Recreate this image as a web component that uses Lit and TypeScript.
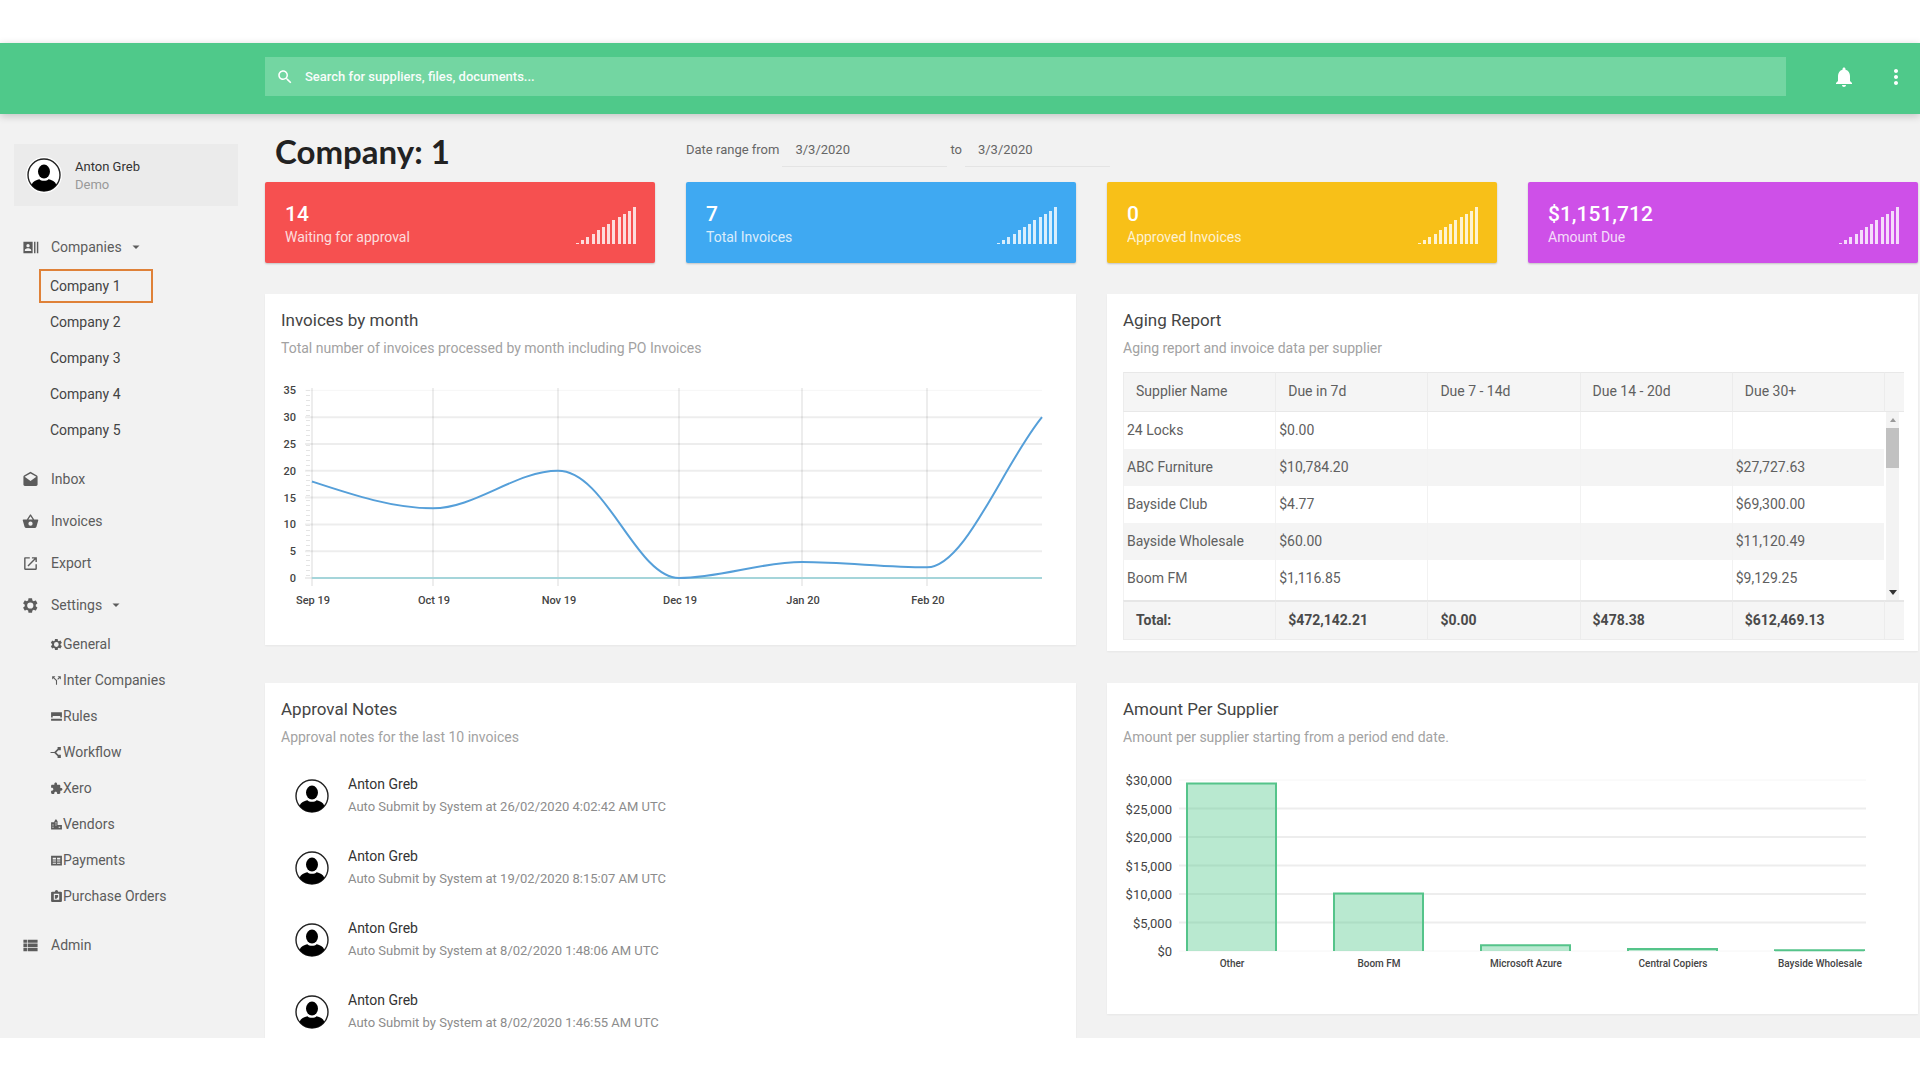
import { LitElement, html, svg, css } from "lit";
import { customElement, property } from "lit/decorators.js";
import { classMap } from "lit/directives/class-map.js";

const GEAR =
  "M19.4 13c.04-.32.06-.65.06-1s-.02-.68-.07-1l2.2-1.7c.2-.15.25-.42.12-.64l-2.08-3.6c-.13-.22-.39-.3-.61-.22l-2.6 1.04c-.53-.4-1.12-.75-1.76-1.01l-.4-2.76A.5.5 0 0 0 13.77 1.7h-4.16c-.26 0-.46.18-.5.42l-.4 2.76c-.63.26-1.22.6-1.75 1L4.36 4.85c-.23-.08-.49 0-.61.22l-2.08 3.6c-.13.22-.08.48.12.63L3.99 11c-.05.32-.09.67-.09 1s.02.68.07 1l-2.2 1.7c-.2.15-.25.43-.12.64l2.08 3.6c.13.22.39.3.61.22l2.6-1.04c.53.4 1.12.75 1.76 1.01l.4 2.76c.05.24.25.41.5.41h4.16c.26 0 .47-.17.5-.41l.4-2.76c.64-.26 1.22-.6 1.75-1.01l2.6 1.04c.23.08.49 0 .61-.22l2.08-3.6c.12-.22.07-.49-.12-.64L19.4 13zM11.7 16.4a4.4 4.4 0 1 1 0-8.8 4.4 4.4 0 0 1 0 8.8z";

const ICONS: Record<string, string> = {
  search:
    "M15.5 14h-.79l-.28-.27C15.41 12.59 16 11.11 16 9.5 16 5.91 13.09 3 9.5 3S3 5.91 3 9.5 5.91 16 9.5 16c1.61 0 3.09-.59 4.23-1.57l.27.28v.79l5 4.99L20.49 19l-4.99-5zm-6 0C7.01 14 5 11.99 5 9.5S7.01 5 9.5 5 14 7.01 14 9.5 11.99 14 9.5 14z",
  bell: "M12 22c1.1 0 2-.9 2-2h-4c0 1.1.89 2 2 2zm6-6v-5c0-3.07-1.64-5.64-4.5-6.32V4c0-.83-.67-1.5-1.5-1.5s-1.5.67-1.5 1.5v.68C7.63 5.36 6 7.92 6 11v5l-2 2v1h16v-1l-2-2z",
  more: "M12 8c1.1 0 2-.9 2-2s-.9-2-2-2-2 .9-2 2 .9 2 2 2zm0 2c-1.1 0-2 .9-2 2s.9 2 2 2 2-.9 2-2-.9-2-2-2zm0 6c-1.1 0-2 .9-2 2s.9 2 2 2 2-.9 2-2-.9-2-2-2z",
  caret: "M5 9l7 7 7-7z",
  contacts:
    "M2 4h13v16H2zM8.5 7a2.4 2.4 0 1 0 0 4.8 2.4 2.4 0 0 0 0-4.8zM4 17h9v-1.3c0-1.8-3-2.6-4.5-2.6S4 13.9 4 15.7zM17 4h2v16h-2zM21 4h2v16h-2z",
  inbox:
    "M22 8c0-.72-.37-1.35-.94-1.7L12 1 2.95 6.3C2.38 6.65 2 7.28 2 8v11c0 1.1.9 2 2 2h16c1.1 0 2-.9 2-2zM12 14L3.74 8 12 3.5 20.26 8z",
  basket:
    "M17.21 9l-4.38-6.56a1 1 0 0 0-1.66 0L6.79 9H2c-.55 0-1 .45-1 1l.04.27 2.54 9.27A2 2 0 0 0 5.5 21h13a2 2 0 0 0 1.93-1.46l2.54-9.27L23 10c0-.55-.45-1-1-1zM9 9l3-4.4L15 9zM12 18a3 3 0 1 1 0-6 3 3 0 0 1 0 6z",
  export:
    "M19 19H5V5h6V3H4.5C3.6 3 3 3.7 3 4.5v15c0 .9.7 1.5 1.5 1.5h15c.9 0 1.5-.7 1.5-1.5V13h-2zM14 3v2h3.59l-9.83 9.83 1.41 1.41L19 6.41V10h2V3z",
  gear: GEAR,
  split:
    "M14 4l2.3 2.3-2.9 2.9 1.4 1.4 2.9-2.9L20 10V4zM10 4H4v6l2.3-2.3 4.7 4.7V20h2v-8.4L7.7 6.3z",
  rules: "M2 4h20v10h-3v-3H5v3H2zM2 16h20v4H2z",
  workflow: "M1 11h7l6-6V2h6v6h-4.5l-4 4 4 4H20v6h-6v-3l-6-6H1z",
  puzzle:
    "M20.5 11H19V7c0-1.1-.9-2-2-2h-4V3.5C13 2.12 11.88 1 10.5 1S8 2.12 8 3.5V5H4c-1.1 0-1.99.9-1.99 2v3.8H3.5c1.49 0 2.7 1.21 2.7 2.7s-1.21 2.7-2.7 2.7H2V20c0 1.1.9 2 2 2h3.8v-1.5c0-1.49 1.21-2.7 2.7-2.7 1.49 0 2.7 1.21 2.7 2.7V22H17c1.1 0 2-.9 2-2v-4h1.5c1.38 0 2.5-1.12 2.5-2.5S21.88 11 20.5 11z",
  vendors:
    "M2 8h6V6l3-4 3 4v7h8v8H2zM4.5 12v2h2v-2zM4.5 16v2h2v-2zM10 8v2h2V8zM10 12v2h2v-2zM16 16v2h3v-2z",
  payments:
    "M2 3h20v18H2zM5 7v3h6V7zM13 7v3h6V7zM5 12v2h6v-2zM13 12v2h6v-2zM5 16v2h6v-2zM13 16v2h6v-2z",
  orders:
    "M4 3h5a3 3 0 0 1 6 0h5l2 1v17l-2 1H4l-2-1V4zM7 7v11h10V7zM9 9h6v4l-3 3H9z",
  admin:
    "M2 4h5v4H2zM8 4h14v4H8zM2 9h5v5H2zM8 9h14v5H8zM2 15h5v5H2zM8 15h14v5H8z",
};

@customElement("ui-icon")
class UiIcon extends LitElement {
  @property() name = "search";
  static styles = css`
    :host {
      display: inline-flex;
      flex: none;
      width: 17px;
      height: 17px;
    }
    .glyph {
      width: 100%;
      height: 100%;
      fill: currentColor;
    }
  `;
  render() {
    return html`<svg class="glyph" viewBox="0 0 24 24" aria-hidden="true">
      <path fill-rule="evenodd" d=${ICONS[this.name]}></path>
    </svg>`;
  }
}

@customElement("user-avatar")
class UserAvatar extends LitElement {
  static styles = css`
    :host {
      display: block;
      flex: none;
      width: 36px;
      height: 36px;
    }
    .face {
      display: block;
      width: 100%;
      height: 100%;
    }
  `;
  render() {
    return html`<svg class="face" viewBox="0 0 36 36" aria-hidden="true">
      <circle cx="18" cy="18" r="18" fill="#fff"></circle>
      <circle cx="18" cy="18" r="16" fill="#fff" stroke="#222" stroke-width="1.4"></circle>
      <ellipse cx="18" cy="14.6" rx="6" ry="7"></ellipse>
      <path d="M5.5 28C7 24 10 23.2 13.5 22.2c1.5 2 7.5 2 9 0C26 23.2 29 24 30.5 28A16 16 0 0 1 5.5 28z"></path>
    </svg>`;
  }
}

interface NavItem {
  label: string;
  icon: string;
  children?: { label: string; icon?: string; active?: boolean }[];
}

const NAV: NavItem[] = [
  {
    label: "Companies",
    icon: "contacts",
    children: [1, 2, 3, 4, 5].map((n) => ({ label: `Company ${n}`, active: n === 1 })),
  },
  { label: "Inbox", icon: "inbox" },
  { label: "Invoices", icon: "basket" },
  { label: "Export", icon: "export" },
  {
    label: "Settings",
    icon: "gear",
    children: [
      { label: "General", icon: "gear" },
      { label: "Inter Companies", icon: "split" },
      { label: "Rules", icon: "rules" },
      { label: "Workflow", icon: "workflow" },
      { label: "Xero", icon: "puzzle" },
      { label: "Vendors", icon: "vendors" },
      { label: "Payments", icon: "payments" },
      { label: "Purchase Orders", icon: "orders" },
    ],
  },
  { label: "Admin", icon: "admin" },
];

@customElement("side-nav")
class SideNav extends LitElement {
  static styles = css`
    :host {
      display: block;
      color: #5c5c5c;
      font-size: 14px;
      line-height: 20px;
    }
    .profile {
      display: flex;
      align-items: center;
      gap: 13px;
      height: 62px;
      margin: 0 27px 20px 14px;
      padding: 0 12px;
      box-sizing: border-box;
      background: #ebebeb;
      font-size: 13px;
      line-height: 18px;
    }
    .who {
      padding-top: 1px;
      color: #333;
    }
    .role {
      color: #999;
    }
    .list {
      margin: 0;
      padding: 0;
      list-style: none;
    }
    .top {
      display: flex;
      align-items: center;
      gap: 12px;
      width: 100%;
      height: 42px;
      padding: 0 22px;
      box-sizing: border-box;
      border: 0;
      background: none;
      color: inherit;
      font: inherit;
      text-decoration: none;
      cursor: pointer;
    }
    .caret {
      width: 12px;
      height: 12px;
      margin-left: -4px;
    }
    .sub {
      margin: 0 0 10px;
      padding: 0 0 0 39px;
      list-style: none;
    }
    .row {
      display: flex;
      align-items: center;
      height: 36px;
    }
    .leaf {
      display: flex;
      align-items: center;
      min-width: 92px;
      height: 30px;
      padding: 0 9px;
      border: 2px solid transparent;
      color: inherit;
      text-decoration: none;
    }
    .plain {
      color: #444;
    }
    .active {
      border-color: #df8138;
    }
    .mini {
      width: 13px;
      height: 13px;
    }
  `;
  render() {
    return html`
      <div class="profile">
        <user-avatar></user-avatar>
        <div>
          <div class="who">Anton Greb</div>
          <div class="role">Demo</div>
        </div>
      </div>
      <nav aria-label="Main">
        <ul class="list">
          ${NAV.map(
            (item) => html`<li>
              ${item.children
                ? html`<button class="top" type="button" aria-expanded="true">
                      <ui-icon name=${item.icon}></ui-icon>${item.label}
                      <ui-icon class="caret" name="caret"></ui-icon>
                    </button>
                    <ul class="sub">
                      ${item.children.map(
                        (c) => html`<li class="row">
                          <a
                            class=${classMap({ leaf: true, plain: !c.icon, active: !!c.active })}
                            href="#${c.label}"
                            >${c.icon ? html`<ui-icon class="mini" name=${c.icon}></ui-icon>` : ""}${c.label}</a
                          >
                        </li>`
                      )}
                    </ul>`
                : html`<a class="top" href="#${item.label}"
                    ><ui-icon name=${item.icon}></ui-icon>${item.label}</a
                  >`}
            </li>`
          )}
        </ul>
      </nav>
    `;
  }
}

@customElement("kpi-card")
class KpiCard extends LitElement {
  @property() value = "";
  @property() label = "";
  static styles = css`
    :host {
      display: flex;
      align-items: flex-start;
      justify-content: space-between;
      height: 81px;
      padding: 19px 19px 0 20px;
      box-sizing: border-box;
      border-radius: 2px;
      box-shadow: 0 1px 2px #0003;
      color: #fff;
    }
    .value {
      font-size: 21px;
      line-height: 26px;
      font-weight: 500;
    }
    .label {
      font-size: 14px;
      line-height: 20px;
      opacity: 0.8;
    }
    .bars {
      width: 60px;
      height: 38px;
      margin-top: 5px;
      fill: #fffc;
    }
  `;
  render() {
    const heights = [1, 4, 7, 10, 14, 17, 20, 24, 27, 30, 33, 37];
    return html`
      <div>
        <div class="value">${this.value}</div>
        <div class="label">${this.label}</div>
      </div>
      <svg class="bars" viewBox="0 0 60 38" aria-hidden="true">
        ${heights.map((h, i) => svg`<rect x=${Math.round(i * 5.2)} y=${38 - h} width="3" height=${h}></rect>`)}
      </svg>
    `;
  }
}

@customElement("panel-card")
class PanelCard extends LitElement {
  @property() heading = "";
  @property() note = "";
  static styles = css`
    :host {
      display: block;
      padding: 16px 14px 11px 16px;
      background: #fff;
      box-shadow: 0 1px 2px #0000000d;
    }
    .heading {
      margin: 0;
      color: #444;
      font-size: 17px;
      line-height: 20px;
      font-weight: 400;
    }
    .note {
      margin: 7px 0 13px;
      color: #a2a2a2;
      font-size: 14px;
      line-height: 22px;
    }
  `;
  render() {
    return html`<h2 class="heading">${this.heading}</h2>
      <p class="note">${this.note}</p>
      <slot></slot>`;
  }
}

const chartStyles = css`
  :host {
    display: block;
  }
  .chart {
    display: block;
    width: 100%;
    height: auto;
    overflow: visible;
    font-family: Roboto, "Liberation Sans", sans-serif;
    fill: #444;
  }
  .end {
    text-anchor: end;
  }
  .mid {
    text-anchor: middle;
  }
  .grid {
    stroke: #000;
    stroke-opacity: 0.07;
    stroke-width: 2;
  }
  .faint {
    stroke: #f6f6f6;
    stroke-width: 1;
  }
`;

@customElement("invoice-chart")
class InvoiceChart extends LitElement {
  static styles = [
    chartStyles,
    css`
      .axis {
        font-size: 11px;
        font-weight: 500;
      }
      .line {
        fill: none;
        stroke: #559fd9;
        stroke-width: 2;
      }
      .zero {
        stroke: #a5d5da;
        stroke-width: 2;
      }
      .ticks {
        stroke: #e4e4e4;
        stroke-width: 4;
        stroke-dasharray: 1 4;
      }
    `,
  ];
  render() {
    const y = (v: number) => 206 - v * 5.36;
    const months: [string, number][] = [
      ["Sep 19", 31],
      ["Oct 19", 152],
      ["Nov 19", 277],
      ["Dec 19", 398],
      ["Jan 20", 521],
      ["Feb 20", 646],
    ];
    return html`<svg class="chart" viewBox="0 0 781 262" role="img" aria-label="Invoices by month">
      ${[0, 5, 10, 15, 20, 25, 30, 35].map(
        (v) => svg`<line class=${v === 35 ? "faint" : "grid"} x1="24" x2="761" y1=${y(v)} y2=${y(v)}></line>
          <text class="axis end" x="15" y=${y(v) + 4}>${v}</text>`
      )}
      <line class="ticks" x1="27" x2="27" y1="18" y2="206"></line>
      ${months.map(
        ([m, x]) => svg`<line class="grid" x1=${x} x2=${x} y1="16" y2="214"></line>
          <text class="axis mid" x=${x + 1} y="232">${m}</text>`
      )}
      <line class="zero" x1="31" x2="761" y1="206" y2="206"></line>
      <path
        class="line"
        d="M31 109.5C72 123 112 136.3 152 136.3C194 136.3 235 98.8 277 98.8C325 98.8 355 206 398 206C439 206 480 190 521 190C563 190 604 195.3 646 195.3C684 195.3 722 93 761 45.2"
      ></path>
    </svg>`;
  }
}

@customElement("supplier-chart")
class SupplierChart extends LitElement {
  static styles = [
    chartStyles,
    css`
      .axis {
        font-size: 13px;
      }
      .cat {
        font-size: 10px;
        font-weight: 500;
      }
      .bar {
        fill: #4fc98a;
        fill-opacity: 0.4;
      }
      .edge {
        fill: none;
        stroke: #55c48a;
        stroke-width: 2;
      }
    `,
  ];
  render() {
    const base = 190;
    const y = (v: number) => base - (v * 171) / 30000;
    const data: [string, number][] = [
      ["Other", 29400],
      ["Boom FM", 10100],
      ["Microsoft Azure", 1000],
      ["Central Copiers", 350],
      ["Bayside Wholesale", 120],
    ];
    return html`<svg class="chart" viewBox="0 0 781 242" role="img" aria-label="Amount per supplier">
      ${[0, 5000, 10000, 15000, 20000, 25000, 30000].map(
        (v) => svg`<line class=${v % 30000 ? "grid" : "faint"} x1="56" x2="743" y1=${y(v)} y2=${y(v)}></line>
          <text class="axis end" x="49" y=${y(v) + 5}>$${v.toLocaleString("en-US")}</text>`
      )}
      ${data.map(([name, v], i) => {
        const x = 64 + i * 147;
        return svg`<rect class="bar" x=${x} y=${y(v)} width="89" height=${base - y(v)}></rect>
          <path class="edge" d="M${x} ${base}V${y(v)}H${x + 89}V${base}"></path>
          <text class="cat mid" x=${x + 45} y="206">${name}</text>`;
      })}
    </svg>`;
  }
}

const AGING = [
  ["24 Locks", "$0.00", "", "", ""],
  ["ABC Furniture", "$10,784.20", "", "", "$27,727.63"],
  ["Bayside Club", "$4.77", "", "", "$69,300.00"],
  ["Bayside Wholesale", "$60.00", "", "", "$11,120.49"],
  ["Boom FM", "$1,116.85", "", "", "$9,129.25"],
];

@customElement("aging-table")
class AgingTable extends LitElement {
  static styles = css`
    :host {
      display: block;
      color: #606060;
    }
    .table {
      width: 100%;
      table-layout: fixed;
      border-collapse: separate;
      border-spacing: 0;
      font-size: 14px;
      line-height: 20px;
      text-align: left;
    }
    .last {
      width: 20px;
    }
    .head,
    .total {
      height: 40px;
      padding: 0 12px 2px;
      box-sizing: border-box;
      border-left: 1px solid #ececec;
      background: #f5f5f5;
    }
    .head {
      border-top: 1px solid #e8e8e8;
      border-bottom: 1px solid #e8e8e8;
      font-weight: 400;
    }
    .total {
      border-top: 2px solid #e6e6e6;
      border-bottom: 1px solid #ececec;
      color: #4a4a4a;
      font-weight: 700;
    }
    .cell {
      height: 37px;
      padding: 0 3px 2px;
      box-sizing: border-box;
      border-left: 1px solid #f2f2f2;
    }
    .even {
      background: #f4f4f4;
    }
    .tail .cell {
      height: 40px;
      padding-bottom: 5px;
    }
    .rail {
      height: 188px;
      padding: 0 5px 0 2px;
      background: #fff;
    }
    .scroll {
      display: flex;
      flex-direction: column;
      align-items: center;
      height: 188px;
      background: #f3f3f3;
    }
    .thumb {
      width: 100%;
      height: 40px;
      margin-bottom: auto;
      background: #c1c1c1;
    }
    .arrow {
      width: 10px;
      height: 16px;
      fill: #999;
    }
    .down {
      fill: #333;
    }
  `;
  render() {
    return html`<table class="table">
      <colgroup>
        <col /><col /><col /><col /><col /><col class="last" />
      </colgroup>
      <thead>
        <tr>
          ${["Supplier Name", "Due in 7d", "Due 7 - 14d", "Due 14 - 20d", "Due 30+"].map(
            (h) => html`<th class="head" scope="col">${h}</th>`
          )}
          <td class="head"></td>
        </tr>
      </thead>
      <tbody>
        ${AGING.map(
          (r, i) => html`<tr class=${classMap({ even: i % 2 === 1, tail: i === 4 })}>
            ${r.map((c) => html`<td class="cell">${c}</td>`)}
            ${i === 0
              ? html`<td class="rail" rowspan="5">
                  <div class="scroll">
                    <svg class="arrow" viewBox="0 0 10 16"><path d="M5 6l3 4H2z"></path></svg>
                    <div class="thumb"></div>
                    <svg class="arrow down" viewBox="0 0 10 16"><path d="M5 11L1 6h8z"></path></svg>
                  </div>
                </td>`
              : ""}
          </tr>`
        )}
      </tbody>
      <tfoot>
        <tr>
          ${["Total:", "$472,142.21", "$0.00", "$478.38", "$612,469.13", ""].map(
            (t) => html`<td class="total">${t}</td>`
          )}
        </tr>
      </tfoot>
    </table>`;
  }
}

@customElement("app-root")
class AppRoot extends LitElement {
  static styles = css`
    :host {
      display: flex;
      flex-direction: column;
      height: 100vh;
      padding: 43px 0 42px;
      box-sizing: border-box;
      background: #fff;
      font-family: Roboto, "Liberation Sans", sans-serif;
    }
    .bar {
      display: grid;
      grid-template-columns: 265px 1fr 134px;
      align-items: center;
      flex: none;
      height: 71px;
      padding-bottom: 4px;
      box-sizing: border-box;
      background: #4fc98a;
      box-shadow: 0 2px 8px #0003;
      z-index: 1;
    }
    .search {
      display: flex;
      align-items: center;
      grid-column: 2;
      gap: 11px;
      height: 39px;
      padding: 0 11px;
      background: #73d6a2;
      color: #fff;
    }
    .glass {
      width: 18px;
      height: 18px;
    }
    .field {
      flex: 1;
      border: 0;
      outline: 0;
      padding: 0;
      background: none;
      color: inherit;
      font: 500 13px/20px Roboto, "Liberation Sans", sans-serif;
    }
    .field::placeholder {
      color: #fff;
      opacity: 0.95;
    }
    .tools {
      display: flex;
      justify-content: flex-end;
      gap: 28px;
      padding-right: 12px;
    }
    .tool {
      display: flex;
      padding: 0;
      border: 0;
      background: none;
      color: #fff;
    }
    .big {
      width: 24px;
      height: 24px;
    }
    .body {
      display: grid;
      grid-template-columns: 265px 1fr;
      flex: 1;
      min-height: 0;
      overflow: hidden;
      background: #f2f2f2;
    }
    .side {
      padding-top: 30px;
    }
    .main {
      padding: 0 2px 0 0;
    }
    .top {
      display: grid;
      grid-template-columns: 390px 1fr;
      column-gap: 31px;
      align-items: center;
      height: 68px;
    }
    .title {
      margin: 0;
      padding: 6px 0 0 10px;
      color: #222;
      font: 700 33px/40px Lato, "Liberation Sans", sans-serif;
    }
    .range {
      display: flex;
      align-items: center;
      gap: 3px;
      padding-top: 4px;
      color: #666;
      font-size: 13px;
      line-height: 20px;
    }
    .date {
      width: 165px;
      height: 34px;
      padding: 0 13px;
      box-sizing: border-box;
      border: 0;
      border-bottom: 1px solid #e4e4e4;
      background: none;
      color: inherit;
      font: inherit;
    }
    .until {
      width: 145px;
    }
    .kpis {
      display: grid;
      grid-template-columns: repeat(4, 1fr);
      gap: 31px;
      margin-bottom: 31px;
    }
    .red {
      background: #f65050;
    }
    .blue {
      background: #3fa9f2;
    }
    .yellow {
      background: #f8c018;
    }
    .purple {
      background: #ce50e8;
    }
    .panels {
      display: grid;
      grid-template-columns: repeat(2, minmax(0, 1fr));
      gap: 32px 31px;
      align-items: start;
    }
    .notes {
      margin: -1px 0 0;
      padding: 0 0 30px 13px;
      list-style: none;
    }
    .entry {
      display: flex;
      align-items: center;
      gap: 18px;
      height: 72px;
    }
    .who {
      padding-bottom: 2px;
    }
    .name {
      color: #333;
      font-size: 14px;
      line-height: 24px;
    }
    .text {
      color: #8c8c8c;
      font-size: 13px;
      line-height: 22px;
    }
  `;
  render() {
    return html`
      <header class="bar">
        <label class="search">
          <ui-icon class="glass" name="search"></ui-icon>
          <input
            class="field"
            type="search"
            aria-label="Search"
            placeholder="Search for suppliers, files, documents..."
          />
        </label>
        <div class="tools">
          <button class="tool" type="button" aria-label="Notifications">
            <ui-icon class="big" name="bell"></ui-icon>
          </button>
          <button class="tool" type="button" aria-label="More">
            <ui-icon class="big" name="more"></ui-icon>
          </button>
        </div>
      </header>
      <div class="body">
        <side-nav class="side"></side-nav>
        <main class="main">
          <div class="top">
            <h1 class="title">Company: 1</h1>
            <div class="range">
              <label for="from">Date range from</label>
              <input class="date" id="from" type="text" value="3/3/2020" />
              <label for="to">to</label>
              <input class="date until" id="to" type="text" value="3/3/2020" />
            </div>
          </div>
          <div class="kpis">
            <kpi-card class="red" value="14" label="Waiting for approval"></kpi-card>
            <kpi-card class="blue" value="7" label="Total Invoices"></kpi-card>
            <kpi-card class="yellow" value="0" label="Approved Invoices"></kpi-card>
            <kpi-card class="purple" value="$1,151,712" label="Amount Due"></kpi-card>
          </div>
          <div class="panels">
            <panel-card
              heading="Invoices by month"
              note="Total number of invoices processed by month including PO Invoices"
            >
              <invoice-chart></invoice-chart>
            </panel-card>
            <panel-card heading="Aging Report" note="Aging report and invoice data per supplier">
              <aging-table></aging-table>
            </panel-card>
            <panel-card heading="Approval Notes" note="Approval notes for the last 10 invoices">
              <ul class="notes">
                ${[
                  "26/02/2020 4:02:42",
                  "19/02/2020 8:15:07",
                  "8/02/2020 1:48:06",
                  "8/02/2020 1:46:55",
                ].map(
                  (t) => html`<li class="entry">
                    <user-avatar></user-avatar>
                    <div class="who">
                      <div class="name">Anton Greb</div>
                      <div class="text">Auto Submit by System at ${t} AM UTC</div>
                    </div>
                  </li>`
                )}
              </ul>
            </panel-card>
            <panel-card
              heading="Amount Per Supplier"
              note="Amount per supplier starting from a period end date."
            >
              <supplier-chart></supplier-chart>
            </panel-card>
          </div>
        </main>
      </div>
    `;
  }
}
